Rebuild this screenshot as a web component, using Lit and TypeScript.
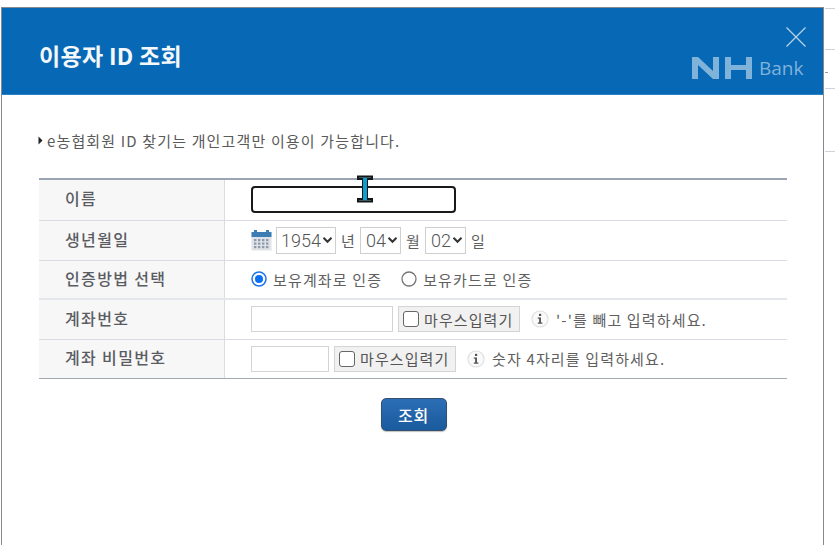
import { LitElement, html, css, svg } from "lit";
import { customElement } from "lit/decorators.js";

@customElement("app-root")
export class AppRoot extends LitElement {
  static styles = css`
    :host { display: block; position: relative; width: 835px; height: 545px; overflow: hidden; background: #fff; font-family: "Noto Sans CJK KR", "Noto Sans", sans-serif; color: #555; }
    .bg-line { position: absolute; left: 825px; right: 0; height: 1px; background: #cfd3d9; }
    .bg-dot { position: absolute; left: 825px; top: 72px; width: 3px; height: 1px; background: #9a9a9a; }
    .dialog { position: absolute; left: 1px; top: 7px; width: 823px; height: 538px; box-sizing: border-box; border: solid #84888f; border-width: 1px 1px 0 1px; background: #fff; }
    .head { height: 87px; box-sizing: border-box; background: #0768b5; border-bottom: 1px solid #2a83c6; position: relative; display: flex; align-items: center; padding-left: 37px; }
    h1 { margin: 0; font-size: 23px; font-weight: 700; color: #f4f8fb; letter-spacing: 0.3px; line-height: 1; position: relative; top: 4px; }
    .close { position: absolute; left: 783px; top: 18px; }
    .logo { position: absolute; left: 690px; top: 48px; display: flex; align-items: center; gap: 6px; }
    .bank { font-family: "Open Sans", sans-serif; font-size: 19px; line-height: 22px; color: #7fb3da; letter-spacing: 0; }
    .notice { margin: 35px 0 0 36px; height: 21px; display: flex; align-items: center; gap: 4px; font-size: 15px; color: #5a5a5a; letter-spacing: 1.15px; }
    .tbl { margin: 27px 0 0 37px; width: 748px; border-top: 2px solid #9aa4b4; border-bottom: 1px solid #a3a9b3; }
    .row { display: grid; grid-template-columns: 186px 1fr; box-sizing: border-box; border-bottom: 1px solid #d9dde3; }
    .row:last-child { border-bottom: 0; }
    .r1 { height: 41px; } .r2 { height: 40px; } .r3 { height: 39px; border-bottom-width: 2px; border-bottom-color: #e3e6ea; } .r4 { height: 40px; } .r5 { height: 38px; }
    .th { background: #f7f7f8; border-right: 1px solid #d9dde3; padding: 0 0 4px 26px; display: flex; align-items: center; font-size: 16px; font-weight: 500; color: #5a5c62; letter-spacing: 1.35px; }
    .td { padding: 0 0 1px 26px; display: flex; align-items: center; font-size: 15px; color: #5f5f5f; letter-spacing: 1.15px; }
    .name { width: 205px; height: 27px; box-sizing: border-box; border: 2px solid #1a1a1a; border-radius: 4px; background: #fff; }
    .sel { box-sizing: border-box; height: 27px; border: 1px solid #cfcfcf; background: #fff; font-family: Roboto, "Liberation Sans", sans-serif; font-size: 18px; font-weight: 300; color: #555; display: flex; align-items: center; justify-content: flex-end; gap: 1px; padding-right: 2px; letter-spacing: 0; }
    .y { width: 60px; margin-left: 4px; } .m { width: 41px; } .d { width: 41px; }
    .unit { width: 24px; padding-left: 5px; box-sizing: border-box; letter-spacing: 0; flex: none; }
    .radio { margin-right: 6px; flex: none; }
    .radio2 { margin-left: 19px; }
    .inp { box-sizing: border-box; height: 26px; border: 1px solid #d4d4d4; background: #fff; }
    .w1 { width: 142px; } .w2 { width: 78px; }
    .mbtn { box-sizing: border-box; height: 26px; width: 122px; margin-left: 5px; background: #f1f1f1; border: 1px solid #d4d4d4; display: flex; align-items: center; gap: 5px; padding: 0 0 0 4px; font-size: 15px; color: #555; letter-spacing: 1.1px; white-space: nowrap; }
    .box { width: 16px; height: 16px; box-sizing: border-box; border: 1px solid #666; border-radius: 3px; background: #fff; flex: none; }
    .info { margin: 0 7px 0 11px; flex: none; }
    .actions { display: flex; justify-content: center; margin-top: 19px; margin-left: 2px; }
    .go { width: 66px; height: 33px; box-sizing: border-box; border: 1px solid #34506f; border-radius: 5px; background: linear-gradient(#2c6eb5, #1a5a9e); color: #fff; font-family: inherit; font-size: 16px; font-weight: 500; letter-spacing: 0.8px; padding: 0; box-shadow: 0 1px 1px rgba(0,0,0,.25); }
    .cursor { position: absolute; left: 356px; top: 175px; }
  `;

  private chev() {
    return html`<svg width="11" height="8" viewBox="0 0 11 8"><path d="M1.5 1.8 5.5 5.8 9.5 1.8" fill="none" stroke="#333" stroke-width="2"/></svg>`;
  }

  private cal() {
    return html`<svg width="21" height="21" viewBox="0 0 21 21" style="flex:none">
      <rect x="0.5" y="3" width="20" height="17.5" fill="#dfe3e8"/>
      <rect x="0.5" y="2" width="20" height="5" fill="#3c7eb4"/>
      <rect x="3" y="0" width="3" height="4" fill="#3c7eb4"/><rect x="15" y="0" width="3" height="4" fill="#3c7eb4"/>
      ${[9, 12.5, 16].map((y) => [3, 7, 11, 15].map((x) => svg`<rect x="${x}" y="${y}" width="2.4" height="2.2" fill="#8f9bab"/>`))}
    </svg>`;
  }

  private info() {
    return html`<svg class="info" width="18" height="18" viewBox="0 0 18 18">
      <circle cx="9" cy="9" r="8" fill="#fafafa" stroke="#dedede" stroke-width="1.2"/>
      <rect x="8" y="3.8" width="2.2" height="2.2" fill="#555"/>
      <path d="M6.8 7.6H10V12.6H11.4V13.8H6.8V12.6H8.1V8.8H6.8Z" fill="#555"/>
    </svg>`;
  }

  render() {
    return html`
      ${[8, 49, 88, 151].map((y) => html`<div class="bg-line" style="top:${y}px"></div>`)}
      <div class="bg-dot"></div>
      <div class="dialog">
        <div class="head">
          <h1>이용자 ID 조회</h1>
          <svg class="close" width="22" height="22" viewBox="0 0 22 22"><path d="M1.5 1.5 20.5 20.5M20.5 1.5 1.5 20.5" stroke="#b9d4ea" stroke-width="1.2" fill="none"/></svg>
          <div class="logo">
            <svg width="61" height="24" viewBox="0 0 61 24">
              <path d="M0 23V1H6L21 15V1H27V23H21L6 9V23Z" fill="#7fb3da"/>
              <path d="M33 1H39V9H54V1H60V23H54V14H39V23H33Z" fill="#7fb3da"/>
            </svg>
            <span class="bank">Bank</span>
          </div>
        </div>
        <div class="notice">
          <svg width="5" height="9" viewBox="0 0 5 9"><path d="M0.5 0.5 4.5 4.5 0.5 8.5Z" fill="#222"/></svg>
          <span>e농협회원 ID 찾기는 개인고객만 이용이 가능합니다.</span>
        </div>
        <div class="tbl">
          <div class="row r1"><div class="th">이름</div><div class="td"><div class="name"></div></div></div>
          <div class="row r2"><div class="th">생년월일</div><div class="td">
            ${this.cal()}
            <div class="sel y">1954${this.chev()}</div><span class="unit">년</span>
            <div class="sel m">04${this.chev()}</div><span class="unit">월</span>
            <div class="sel d">02${this.chev()}</div><span class="unit">일</span>
          </div></div>
          <div class="row r3"><div class="th">인증방법 선택</div><div class="td">
            <svg class="radio" width="16" height="16" viewBox="0 0 16 16"><circle cx="8" cy="8" r="7" fill="#fff" stroke="#1a73e8" stroke-width="1.5"/><circle cx="8" cy="8" r="4" fill="#0b6ff0"/></svg>
            <span>보유계좌로 인증</span>
            <svg class="radio radio2" width="16" height="16" viewBox="0 0 16 16"><circle cx="8" cy="8" r="7" fill="#fff" stroke="#767676" stroke-width="1.3"/></svg>
            <span>보유카드로 인증</span>
          </div></div>
          <div class="row r4"><div class="th">계좌번호</div><div class="td">
            <div class="inp w1"></div>
            <div class="mbtn"><span class="box"></span>마우스입력기</div>
            ${this.info()}
            <span>'-'를 빼고 입력하세요.</span>
          </div></div>
          <div class="row r5"><div class="th">계좌 비밀번호</div><div class="td">
            <div class="inp w2"></div>
            <div class="mbtn"><span class="box"></span>마우스입력기</div>
            ${this.info()}
            <span>숫자 4자리를 입력하세요.</span>
          </div></div>
        </div>
        <div class="actions"><button class="go">조회</button></div>
      </div>
      <svg class="cursor" width="18" height="28" viewBox="0 0 18 28">
        <path d="M1 0.5H17V5H12V23H17V27.5H1V23H6V5H1Z" fill="#151515"/>
        <rect x="7" y="3" width="4" height="22" fill="#0a9fd0"/>
        <rect x="3" y="2" width="12" height="1" fill="#3a5a66"/>
        <rect x="3" y="25" width="12" height="1" fill="#3a5a66"/>
      </svg>
    `;
  }
}
